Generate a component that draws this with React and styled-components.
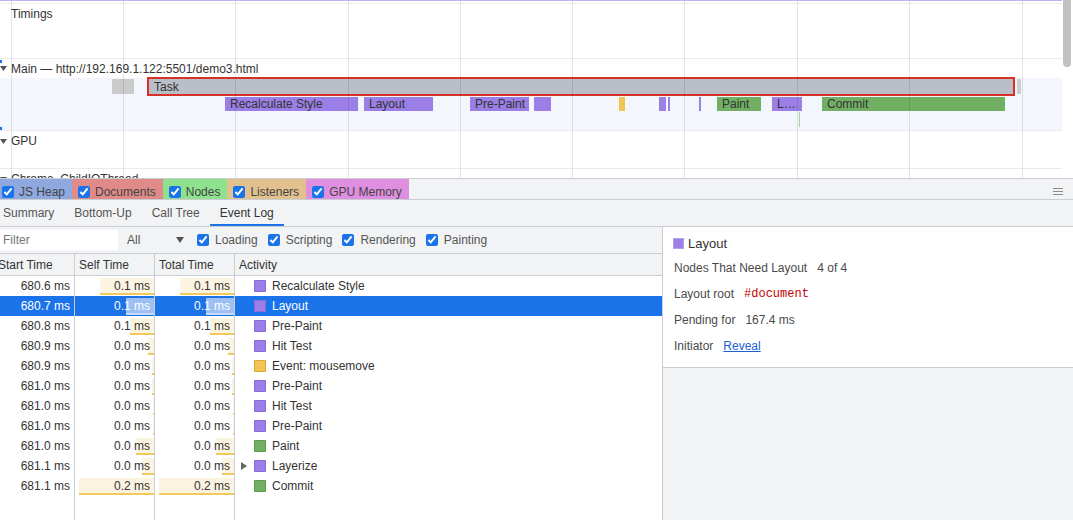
import React from "react";
import styled, { createGlobalStyle } from "styled-components";

const BORDER = "#cacdd1";
const PANEL = "#f1f3f4";
const BLUE = "#1a73e8";

const CATEGORY = {
  rendering: { fill: "#9b7fe6", edge: "#8a6dda" },
  scripting: { fill: "#f1c453", edge: "#d9aa3b" },
  painting: { fill: "#71b063", edge: "#5d9a50" },
};

const GRID_X = [11, 123, 235, 348, 460, 572, 684, 797, 909, 1022];

// bars on the main thread track: x / width in px, level = row in the flame chart
const FLAME_BARS = [
  { x: 112, w: 22, level: 0, color: "#cbcbcb" },
  { x: 149, w: 864, level: 0, color: "#b9bec8", label: "Task", selected: true },
  { x: 1017, w: 4, level: 0, color: "#cdcdcd" },
  { x: 225, w: 133, level: 1, color: CATEGORY.rendering.fill, label: "Recalculate Style" },
  { x: 364, w: 69, level: 1, color: CATEGORY.rendering.fill, label: "Layout" },
  { x: 470, w: 59, level: 1, color: CATEGORY.rendering.fill, label: "Pre-Paint" },
  { x: 534, w: 17, level: 1, color: CATEGORY.rendering.fill },
  { x: 619, w: 6, level: 1, color: CATEGORY.scripting.fill },
  { x: 659, w: 7, level: 1, color: CATEGORY.rendering.fill },
  { x: 668, w: 2, level: 1, color: CATEGORY.rendering.fill },
  { x: 699, w: 2, level: 1, color: CATEGORY.rendering.fill },
  { x: 717, w: 44, level: 1, color: CATEGORY.painting.fill, label: "Paint" },
  { x: 772, w: 30, level: 1, color: CATEGORY.rendering.fill, label: "L…" },
  { x: 822, w: 183, level: 1, color: CATEGORY.painting.fill, label: "Commit" },
  { x: 799, w: 1, level: 2, color: "#a9d19f" },
];

const LEVEL_TOP = [1, 19, 34];
const LEVEL_HEIGHT = [15, 14, 15];

const ROWS = [
  { start: "680.6 ms", self: "0.1 ms", total: "0.1 ms", bar: 54, name: "Recalculate Style", cat: "rendering" },
  { start: "680.7 ms", self: "0.1 ms", total: "0.1 ms", bar: 28, name: "Layout", cat: "rendering", selected: true },
  { start: "680.8 ms", self: "0.1 ms", total: "0.1 ms", bar: 24, name: "Pre-Paint", cat: "rendering" },
  { start: "680.9 ms", self: "0.0 ms", total: "0.0 ms", bar: 6, name: "Hit Test", cat: "rendering" },
  { start: "680.9 ms", self: "0.0 ms", total: "0.0 ms", bar: 2, name: "Event: mousemove", cat: "scripting" },
  { start: "681.0 ms", self: "0.0 ms", total: "0.0 ms", bar: 2, name: "Pre-Paint", cat: "rendering" },
  { start: "681.0 ms", self: "0.0 ms", total: "0.0 ms", bar: 1, name: "Hit Test", cat: "rendering" },
  { start: "681.0 ms", self: "0.0 ms", total: "0.0 ms", bar: 1, name: "Pre-Paint", cat: "rendering" },
  { start: "681.0 ms", self: "0.0 ms", total: "0.0 ms", bar: 18, name: "Paint", cat: "painting" },
  { start: "681.1 ms", self: "0.0 ms", total: "0.0 ms", bar: 12, name: "Layerize", cat: "rendering", expandable: true },
  { start: "681.1 ms", self: "0.2 ms", total: "0.2 ms", bar: 75, name: "Commit", cat: "painting" },
];

const COUNTERS = [
  { label: "JS Heap", bg: "#8fa8e0" },
  { label: "Documents", bg: "#e08a8a" },
  { label: "Nodes", bg: "#8ee28e" },
  { label: "Listeners", bg: "#e2c18e" },
  { label: "GPU Memory", bg: "#e08ee0" },
];

const TABS = ["Summary", "Bottom-Up", "Call Tree", "Event Log"];
const FILTERS = ["Loading", "Scripting", "Rendering", "Painting"];

const GlobalStyle = createGlobalStyle`
  html, body {
    margin: 0;
    padding: 0;
    background: #fff;
  }
  body {
    font-family: "Liberation Sans", Arial, sans-serif;
    font-size: 12px;
    color: #333;
  }
  * {
    box-sizing: border-box;
  }
`;

const Page = styled.div`
  width: 1073px;
  height: 520px;
  display: flex;
  flex-direction: column;
  overflow: hidden;
`;

/* ---------- flame chart ---------- */

const Flame = styled.div`
  height: 178px;
  flex-shrink: 0;
  display: flex;
  overflow: hidden;
`;

const FlameBody = styled.div`
  position: relative;
  flex: 1;
  display: flex;
  flex-direction: column;
  border-top: 1px solid #c5b0f2;
  padding-top: 2px;
`;

const Group = styled.div`
  position: relative;
  flex-shrink: 0;
  height: ${({ $height }) => ($height ? `${$height}px` : "auto")};
  border-top: 1px solid #ebebeb;
`;

const MainGroup = styled(Group)`
  &::before,
  &::after {
    content: "";
    position: absolute;
    left: 0;
    width: 2px;
    height: 3px;
    background: ${BLUE};
  }
  &::before {
    top: 1px;
  }
  &::after {
    bottom: 0;
  }
`;

const TrackHeader = styled.div`
  height: ${({ $height }) => $height || 20}px;
  display: flex;
  align-items: center;
  padding-left: ${({ $indent }) => ($indent ? 11 : 0)}px;
  white-space: nowrap;
  color: #333;
`;

const Caret = styled.svg`
  width: 7px;
  height: 5px;
  margin-right: 4px;
  flex-shrink: 0;
`;

const Track = styled.div`
  position: relative;
  height: 52px;
  background: #f3f7fd;
`;

const Bar = styled.div`
  position: absolute;
  background: ${({ $color }) => $color};
  color: #333;
  padding-left: 5px;
  white-space: nowrap;
  overflow: hidden;
  display: flex;
  align-items: center;
  box-shadow: ${({ $selected }) => ($selected ? "0 0 0 2px #d93025" : "none")};
  z-index: ${({ $selected }) => ($selected ? 2 : 1)};
`;

const GridOverlay = styled.div`
  position: absolute;
  inset: 0;
  pointer-events: none;
  z-index: 3;
`;

const GridLine = styled.div`
  position: absolute;
  top: 0;
  bottom: 0;
  width: 1px;
  background: rgba(0, 0, 0, 0.1);
`;

const ScrollGutter = styled.div`
  width: 11px;
  flex-shrink: 0;
  background: #fff;
  padding-left: 1px;
`;

const ScrollThumb = styled.div`
  width: 8px;
  height: 67px;
  background: #c1c1c1;
  border-radius: 0 0 4px 4px;
`;

/* ---------- counters + tabs ---------- */

const CounterBar = styled.div`
  height: 22px;
  flex-shrink: 0;
  display: flex;
  align-items: stretch;
  background: ${PANEL};
  border-top: 1px solid ${BORDER};
  border-bottom: 1px solid ${BORDER};
`;

const Counter = styled.label`
  display: flex;
  align-items: center;
  gap: 5px;
  padding: 5px 7px 0 ${({ $first }) => ($first ? 2 : 6)}px;
  background: ${({ $bg }) => $bg};
  color: #444;
  white-space: nowrap;
`;

const Check = styled.input.attrs({ type: "checkbox", defaultChecked: true })`
  width: 12px;
  height: 12px;
  margin: 0;
  accent-color: ${BLUE};
  flex-shrink: 0;
`;

const Spacer = styled.div`
  flex: 1;
`;

const MenuIcon = styled.svg`
  width: 10px;
  height: 7px;
  align-self: center;
  margin: 5px 10px 0 0;
`;

const TabBar = styled.div`
  height: 27px;
  flex-shrink: 0;
  display: flex;
  background: ${PANEL};
  border-bottom: 1px solid ${BORDER};
`;

const Tab = styled.div`
  height: 26px;
  display: flex;
  align-items: center;
  padding: 2px 10px 0 ${({ $first }) => ($first ? 3 : 10)}px;
  color: ${({ $active }) => ($active ? "#333" : "#555")};
  border-bottom: 2px solid ${({ $active }) => ($active ? BLUE : "transparent")};
  white-space: nowrap;
`;

/* ---------- event log ---------- */

const Content = styled.div`
  flex: 1;
  display: flex;
  min-height: 0;
`;

const LeftPane = styled.div`
  width: 663px;
  flex-shrink: 0;
  display: flex;
  flex-direction: column;
  border-right: 1px solid ${BORDER};
`;

const Toolbar = styled.div`
  height: 27px;
  flex-shrink: 0;
  display: flex;
  align-items: center;
  background: ${PANEL};
  border-bottom: 1px solid ${BORDER};
`;

const FilterInput = styled.input`
  width: 118px;
  height: 20px;
  border: none;
  outline: none;
  padding: 0 3px;
  font: inherit;
  color: #333;
  background: #fff;
  &::placeholder {
    color: #757575;
  }
`;

const Select = styled.div`
  width: 57px;
  margin: 0 13px 0 9px;
  display: flex;
  align-items: center;
  justify-content: space-between;
  color: #555;
`;

const FilterOption = styled.label`
  display: flex;
  align-items: center;
  gap: 6px;
  margin-right: 10px;
  color: #555;
  white-space: nowrap;
`;

const Grid = styled.div`
  display: grid;
  grid-template-columns: 75px 80px 80px 1fr;
`;

const HeaderRow = styled(Grid)`
  height: 22px;
  flex-shrink: 0;
  background: ${PANEL};
  border-bottom: 1px solid ${BORDER};
`;

const HeaderCell = styled.div`
  display: flex;
  align-items: center;
  padding-left: ${({ $first }) => ($first ? 0 : 4)}px;
  border-right: ${({ $last }) => ($last ? "none" : `1px solid ${BORDER}`)};
  white-space: nowrap;
  overflow: hidden;
  color: #333;
`;

const HeaderText = styled.span`
  margin-left: ${({ $shift }) => $shift || 0}px;
`;

const Row = styled(Grid)`
  height: 20px;
  background: ${({ $selected }) => ($selected ? BLUE : "#fff")};
  color: ${({ $selected }) => ($selected ? "#fff" : "#333")};
`;

const Cell = styled.div`
  position: relative;
  display: flex;
  align-items: center;
  justify-content: ${({ $align }) => ($align === "right" ? "flex-end" : "flex-start")};
  padding: 0 4px 0 ${({ $pl }) => $pl || 0}px;
  border-right: ${({ $last }) => ($last ? "none" : `1px solid ${BORDER}`)};
  white-space: nowrap;
  overflow: hidden;
`;

const CellText = styled.span`
  position: relative;
  z-index: 1;
`;

const TimeBar = styled.div`
  position: absolute;
  right: 0;
  top: 2px;
  bottom: 1px;
  background: ${({ $selected }) => ($selected ? "#9dbff4" : "#fcf3e1")};
  border-bottom: 2px solid ${({ $selected }) => ($selected ? "#c6dafa" : "#f1c95f")};
`;

const Expander = styled.span`
  width: 13px;
  flex-shrink: 0;
  display: flex;
  align-items: center;
`;

const Swatch = styled.span`
  width: 12px;
  height: 12px;
  flex-shrink: 0;
  margin-right: 6px;
  background: ${({ $cat }) => CATEGORY[$cat].fill};
  border: 1px solid ${({ $cat }) => CATEGORY[$cat].edge};
`;

const Filler = styled(Grid)`
  flex: 1;
`;

const FillerCell = styled.div`
  border-right: ${({ $last }) => ($last ? "none" : `1px solid ${BORDER}`)};
`;

/* ---------- details ---------- */

const RightPane = styled.div`
  flex: 1;
  display: flex;
  flex-direction: column;
  background: ${PANEL};
`;

const DetailsCard = styled.div`
  background: #fff;
  border-bottom: 1px solid ${BORDER};
  padding: 6px 10px 8px 10px;
`;

const DetailsTitle = styled.div`
  height: 20px;
  display: flex;
  align-items: center;
  gap: 4px;
  margin-bottom: 2px;
  font-size: 13px;
  color: #333;
`;

const TitleSwatch = styled.span`
  width: 11px;
  height: 11px;
  background: ${CATEGORY.rendering.fill};
  border: 1px solid #b1a0ea;
`;

const DetailRow = styled.div`
  height: 26px;
  display: flex;
  align-items: center;
  gap: 10px;
  padding-left: 1px;
  color: #4a4a4a;
`;

const NodeLink = styled.span`
  font-family: "Liberation Mono", "DejaVu Sans Mono", monospace;
  font-size: 12px;
  color: #c80000;
`;

const Link = styled.span`
  color: #1a5fd4;
  text-decoration: underline;
`;

const DownCaret = () => (
  <Caret viewBox="0 0 7 5">
    <path d="M0 0 L7 0 L3.5 5 Z" fill="#555" />
  </Caret>
);

const timeCells = (row) =>
  [row.self, row.total].map((value, i) => (
    <Cell key={i} $align="right">
      <TimeBar $selected={row.selected} style={{ width: row.bar }} />
      <CellText>{value}</CellText>
    </Cell>
  ));

export default function App() {
  return (
    <>
      <GlobalStyle />
      <Page>
        <Flame>
          <FlameBody>
            <Group $height={55}>
              <TrackHeader $indent>Timings</TrackHeader>
            </Group>
            <MainGroup>
              <TrackHeader $height={19}>
                <DownCaret />
                Main — http://192.169.1.122:5501/demo3.html
              </TrackHeader>
              <Track>
                {FLAME_BARS.map((bar, i) => (
                  <Bar
                    key={i}
                    $color={bar.color}
                    $selected={bar.selected}
                    style={{
                      left: bar.x,
                      width: bar.w,
                      top: LEVEL_TOP[bar.level],
                      height: LEVEL_HEIGHT[bar.level],
                      paddingLeft: bar.label ? 5 : 0,
                    }}
                  >
                    {bar.label}
                  </Bar>
                ))}
              </Track>
            </MainGroup>
            <Group $height={38}>
              <TrackHeader>
                <DownCaret />
                GPU
              </TrackHeader>
            </Group>
            <Group>
              <TrackHeader>
                <DownCaret />
                Chrome_ChildIOThread
              </TrackHeader>
            </Group>
            <GridOverlay>
              {GRID_X.map((x) => (
                <GridLine key={x} style={{ left: x }} />
              ))}
            </GridOverlay>
          </FlameBody>
          <ScrollGutter>
            <ScrollThumb />
          </ScrollGutter>
        </Flame>

        <CounterBar>
          {COUNTERS.map((c, i) => (
            <Counter key={c.label} $bg={c.bg} $first={i === 0}>
              <Check />
              {c.label}
            </Counter>
          ))}
          <Spacer />
          <MenuIcon viewBox="0 0 10 7">
            <path d="M0 0.5 H10 M0 3.5 H10 M0 6.5 H10" stroke="#8a8a8a" strokeWidth="1" />
          </MenuIcon>
        </CounterBar>

        <TabBar>
          {TABS.map((t, i) => (
            <Tab key={t} $first={i === 0} $active={t === "Event Log"}>
              {t}
            </Tab>
          ))}
        </TabBar>

        <Content>
          <LeftPane>
            <Toolbar>
              <FilterInput placeholder="Filter" />
              <Select>
                All
                <svg width="8" height="6" viewBox="0 0 8 6">
                  <path d="M0 0 L8 0 L4 6 Z" fill="#555" />
                </svg>
              </Select>
              {FILTERS.map((f) => (
                <FilterOption key={f}>
                  <Check />
                  {f}
                </FilterOption>
              ))}
            </Toolbar>

            <HeaderRow>
              <HeaderCell $first>
                <HeaderText $shift={-2}>Start Time</HeaderText>
              </HeaderCell>
              <HeaderCell>Self Time</HeaderCell>
              <HeaderCell>Total Time</HeaderCell>
              <HeaderCell $last>Activity</HeaderCell>
            </HeaderRow>

            {ROWS.map((row, i) => (
              <Row key={i} $selected={row.selected}>
                <Cell $align="right">
                  <CellText>{row.start}</CellText>
                </Cell>
                {timeCells(row)}
                <Cell $last $pl={6}>
                  <Expander>
                    {row.expandable && (
                      <svg width="6" height="8" viewBox="0 0 6 8">
                        <path d="M0 0 L6 4 L0 8 Z" fill="#666" />
                      </svg>
                    )}
                  </Expander>
                  <Swatch $cat={row.cat} />
                  <CellText>{row.name}</CellText>
                </Cell>
              </Row>
            ))}

            <Filler>
              <FillerCell />
              <FillerCell />
              <FillerCell />
              <FillerCell $last />
            </Filler>
          </LeftPane>

          <RightPane>
            <DetailsCard>
              <DetailsTitle>
                <TitleSwatch />
                Layout
              </DetailsTitle>
              <DetailRow>
                <span>Nodes That Need Layout</span>
                <span>4 of 4</span>
              </DetailRow>
              <DetailRow>
                <span>Layout root</span>
                <NodeLink>#document</NodeLink>
              </DetailRow>
              <DetailRow>
                <span>Pending for</span>
                <span>167.4 ms</span>
              </DetailRow>
              <DetailRow>
                <span>Initiator</span>
                <Link>Reveal</Link>
              </DetailRow>
            </DetailsCard>
          </RightPane>
        </Content>
      </Page>
    </>
  );
}
